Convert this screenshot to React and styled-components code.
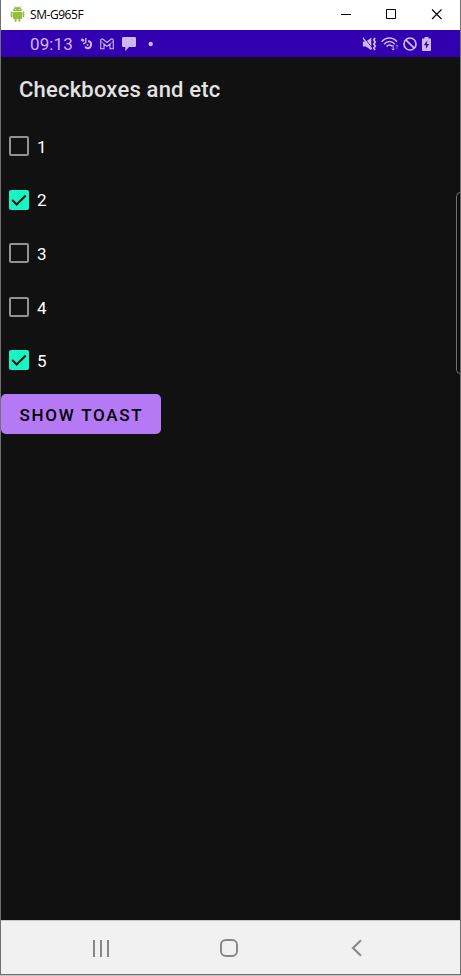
import React from "react";
import styled, { createGlobalStyle } from "styled-components";

const GlobalStyle = createGlobalStyle`
  * { box-sizing: border-box; }
  body { margin: 0; background: #c4c4c4; overflow: hidden; }
`;

const Window = styled.main`
  position: relative;
  width: 461px;
  height: 975px;
  display: flex;
  flex-direction: column;
  border: solid #707070;
  border-width: 0 1px 1px;
  background: #111;
  font-family: Roboto, sans-serif;
  overflow: hidden;
`;

const TitleBar = styled.header`
  height: 30px;
  flex: none;
  display: flex;
  align-items: center;
  padding: 0 0 2px 9px;
  background: #fff;
  color: #000;
`;

const WindowTitle = styled.span`
  flex: 1;
  margin-left: 5px;
  padding-top: 1px;
  font: 12px/16px "Open Sans", sans-serif;
  letter-spacing: -0.45px;
`;

const WindowControls = styled.div`
  display: flex;
  align-items: center;
  gap: 34px;
  padding-right: 18px;
`;

const Icon = styled.svg`
  display: block;
  flex: none;
  overflow: visible;
`;

const StatusBar = styled.div`
  height: 27px;
  flex: none;
  display: flex;
  align-items: center;
  justify-content: space-between;
  padding: 0 29px 0 29px;
  background: #3300b0;
  color: #cdb9ef;
`;

const StatusGroup = styled.div`
  display: flex;
  align-items: center;
  gap: ${(p) => p.$gap}px;
`;

const Clock = styled.time`
  width: 43px;
  font-size: 17px;
  line-height: 27px;
  letter-spacing: 0.1px;
  padding-top: 1px;
`;

const AppBar = styled.h1`
  height: 62.2px;
  flex: none;
  margin: 0;
  padding: 1px 0 0 18px;
  color: #e2e2e2;
  font-size: 22px;
  line-height: 63px;
  font-weight: 500;
  letter-spacing: 0.2px;
`;

const Content = styled.section`
  flex: 1;
`;

const CheckRow = styled.label`
  height: 53.6px;
  display: flex;
  align-items: center;
  gap: 8px;
  padding-left: 8px;
  color: #fff;
  font-size: 17px;
  line-height: 22px;
`;

const CheckBox = styled.span`
  width: 20px;
  height: 20px;
  flex: none;
  border: 2px solid ${(p) => (p.$checked ? "#18f5c5" : "#929292")};
  border-radius: 2px;
  background: ${(p) => (p.$checked ? "#18f5c5" : "transparent")};
`;

const CheckLabel = styled.span`
  padding-top: 1.6px;
`;

const ToastButton = styled.button`
  display: block;
  width: 160px;
  height: 40px;
  margin-top: 6.8px;
  padding: 2px 0 0 1px;
  border: 0;
  border-radius: 5px;
  background: #b579f5;
  color: #000;
  font: 500 17px/38px Roboto, sans-serif;
  letter-spacing: 1.75px;
  white-space: nowrap;
`;

const NavBar = styled.nav`
  height: 54px;
  flex: none;
  display: flex;
  align-items: center;
  gap: 110px;
  padding: 0 0 0 91px;
  border-top: 1px solid #c9c5c7;
  background: #f1f1f1;
  color: #888;
`;

const BackIcon = styled.svg`
  display: block;
  flex: none;
  margin-left: 3px;
`;

const EdgeHandle = styled.div`
  position: absolute;
  top: 192px;
  right: -1px;
  width: 5px;
  height: 182px;
  border: 1px solid #727272;
  border-right: 0;
  border-radius: 5px 0 0 5px;
  background: #0c0c0c;
`;

const options = [
  { label: "1", checked: false },
  { label: "2", checked: true },
  { label: "3", checked: false },
  { label: "4", checked: false },
  { label: "5", checked: true },
];

const AndroidIcon = () => (
  <Icon width="15" height="18" viewBox="0 0 15 18" fill="#96bd42">
    <path d="M3 6C3 3.5 5 2 7.5 2S12 3.5 12 6Z" />
    <path d="m4 1 1.5 2M11 1 9.5 3" stroke="#96bd42" strokeWidth=".8" />
    <rect x="3" y="6.7" width="9" height="7.3" rx="1" />
    <rect x="0.7" y="6.4" width="1.8" height="6" rx=".9" />
    <rect x="12.5" y="6.4" width="1.8" height="6" rx=".9" />
    <rect x="4.6" y="12.5" width="2" height="4.3" rx=".9" />
    <rect x="8.4" y="12.5" width="2" height="4.3" rx=".9" />
    <circle cx="5.6" cy="4.3" r=".5" fill="#fff" />
    <circle cx="9.4" cy="4.3" r=".5" fill="#fff" />
  </Icon>
);

const AppNoticeIcon = () => (
  <Icon width="11" height="13" viewBox="0 0 11 13" fill="none" stroke="currentColor">
    <path d="M.3 2.2 3 4" strokeWidth="2.4" />
    <path d="M4.8 1v4.6L2.3 6.8" strokeWidth="1.4" />
    <path d="M7 4.4c2-.3 3.2.9 3.1 2.8-.1 2.2-1.6 4-3.6 4-1.3 0-2-.7-2.2-1.8" strokeWidth="2" />
    <circle cx="6.6" cy="7.9" r=".9" fill="currentColor" stroke="none" />
  </Icon>
);

const GmailIcon = () => (
  <Icon width="14" height="12" viewBox="0 0 14 12" fill="none" stroke="currentColor" strokeWidth="1.1">
    <path d="M.7 10.7V2.2C.7.8 2 .5 3 1.3l4 3.2 4-3.2c1-.8 2.3-.5 2.3.9v8.5H10V6L7 8.4 4 6v4.7Z" strokeLinejoin="round" />
    <path d="M.9 3.5 4 6m9.1-2.5L10 6" strokeWidth=".8" />
  </Icon>
);

const MessageIcon = () => (
  <Icon width="14" height="14" viewBox="0 0 14 14" fill="currentColor">
    <path d="M1.2 0h11.6Q14 0 14 1.2v7.6Q14 10 12.8 10H7l-3.7 4V10H1.2Q0 10 0 8.8V1.2Q0 0 1.2 0Z" />
  </Icon>
);

const MuteIcon = () => (
  <Icon width="14" height="14" viewBox="0 0 14 14" fill="none" stroke="currentColor">
    <path d="M.9 4.5h3L9.3.8v12.4L3.9 9.5h-3Z" fill="currentColor" stroke="none" />
    <path d="M2 .8 10.3 11" stroke="#3300b0" strokeWidth="1" />
    <path d="M1 1 9.8 11.8" strokeWidth="1.2" />
    <path d="M13 .8 11.8 3l1.5 2-1.5 2 1.5 2-1.5 2 1.2 2" strokeWidth="1.7" />
  </Icon>
);

const WifiIcon = () => (
  <Icon width="18" height="14" viewBox="0 0 18 14" fill="none" stroke="currentColor">
    <path d="M.7 4.7C5-.2 12-.2 16 4.7M3.1 7.2c3.2-3.6 7.6-3.6 10.7 0M5.5 9.6c1.9-2.1 4.2-2.1 6 0" strokeWidth="1.5" />
    <path d="M12.2 8v5m-1.4-1.3 1.4 1.4 1.4-1.4" />
    <path d="M16 12V8m-1.4 1.2L16 7.8l1.4 1.4" opacity=".5" />
  </Icon>
);

export default function App() {
  return (
    <>
      <GlobalStyle />
      <Window>
        <TitleBar>
          <AndroidIcon />
          <WindowTitle>SM-G965F</WindowTitle>
          <WindowControls>
            <Icon width="11" height="11" stroke="#000">
              <path d="M0 5.5h10" />
            </Icon>
            <Icon width="11" height="11" fill="none" stroke="#000">
              <path d="M.5.5h9v9h-9Z" />
            </Icon>
            <Icon width="11" height="11" stroke="#000" strokeWidth="1.1">
              <path d="m1 .5 9.5 9.5m0-9.5L1 10" />
            </Icon>
          </WindowControls>
        </TitleBar>
        <StatusBar>
          <StatusGroup $gap={8}>
            <Clock>09:13</Clock>
            <AppNoticeIcon />
            <GmailIcon />
            <MessageIcon />
            <Icon width="14" height="6" fill="currentColor">
              <circle cx="6.7" cy="3" r="2.2" />
            </Icon>
          </StatusGroup>
          <StatusGroup $gap={4.7}>
            <MuteIcon />
            <WifiIcon />
            <Icon width="14" height="14" fill="none" stroke="currentColor" strokeWidth="1.7">
              <circle cx="7" cy="7" r="6" />
              <path d="m2.8 2.8 8.4 8.4" />
            </Icon>
            <Icon width="9" height="14" fill="currentColor">
              <path d="M2.5 0h4v1.5H8Q9 1.5 9 2.5V13Q9 14 8 14H1Q0 14 0 13V2.5Q0 1.5 1 1.5h1.5Z" />
              <path d="M5.4 3.3 1.8 8.2h2.4L3.7 12l3.6-5H4.9Z" fill="#3300b0" />
            </Icon>
          </StatusGroup>
        </StatusBar>
        <AppBar>Checkboxes and etc</AppBar>
        <Content>
          {options.map(({ label, checked }) => (
            <CheckRow key={label}>
              <CheckBox $checked={checked}>
                {checked && (
                  <Icon width="16" height="16" fill="none" stroke="#111" strokeWidth="2.1">
                    <path d="m1.2 7.9 4.5 4.5 9-9" />
                  </Icon>
                )}
              </CheckBox>
              <CheckLabel>{label}</CheckLabel>
            </CheckRow>
          ))}
          <ToastButton>SHOW TOAST</ToastButton>
        </Content>
        <NavBar>
          <Icon width="18" height="18" stroke="currentColor" strokeWidth="2">
            <path d="M2 1v17M9 1v17M16 1v17" />
          </Icon>
          <Icon width="18" height="18" fill="none" stroke="currentColor" strokeWidth="2">
            <rect x="1" y="1" width="16" height="16" rx="4.7" />
          </Icon>
          <BackIcon width="12" height="18" fill="none" stroke="currentColor" strokeWidth="2.1">
            <path d="M10 1.2 2 9l8 7.8" />
          </BackIcon>
        </NavBar>
        <EdgeHandle />
      </Window>
    </>
  );
}
